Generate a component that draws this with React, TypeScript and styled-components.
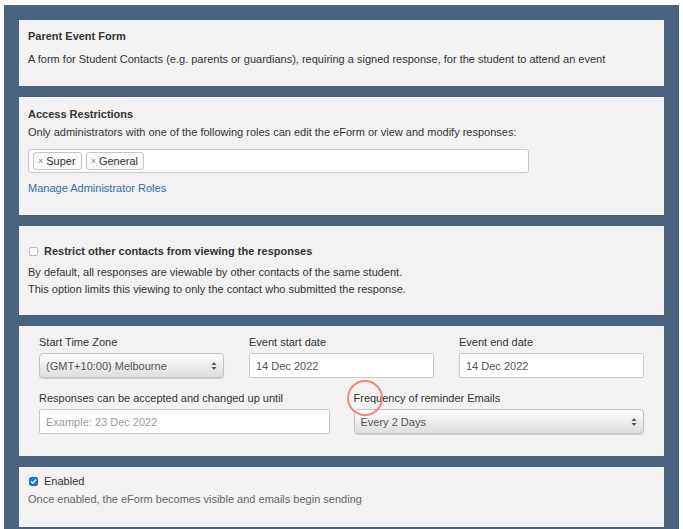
import React from "react"
import styled, { createGlobalStyle } from "styled-components"

const GlobalStyle = createGlobalStyle`
	html, body {
		margin: 0;
		padding: 0;
		background: #ffffff;
	}
	body {
		font-family: "Liberation Sans", Arial, Helvetica, sans-serif;
		font-size: 11px;
		color: #333333;
	}
`

const Page = styled.div`
	padding: 5px 4px 0 4px;
	width: 675px;
	height: 524px;
	overflow: hidden;
`

const Frame = styled.div`
	position: relative;
	background: #4a6480;
	height: 524px;
	padding: 15px 15px 0 15px;
	box-sizing: border-box;
	display: flex;
	flex-direction: column;
	gap: 11px;
`

const Panel = styled.section<{ $top?: number; $bottom?: number; $side?: number }>`
	background: #f2f2f2;
	padding: ${({ $top = 8 }) => $top}px ${({ $side = 9 }) => $side}px
		${({ $bottom = 19 }) => $bottom}px;
	flex-shrink: 0;
`

const Title = styled.div`
	font-weight: bold;
	line-height: 16px;
	color: #333;
`

const Text = styled.div<{ $muted?: boolean; $gap?: number }>`
	line-height: ${({ $gap }) => ($gap ? 17 : 16)}px;
	margin-top: ${({ $gap = 2 }) => $gap}px;
	color: ${({ $muted }) => ($muted ? "#666" : "#333")};
`

const TagBox = styled.div`
	margin-top: 9px;
	width: 501px;
	height: 24px;
	box-sizing: border-box;
	background: #fff;
	border: 1px solid #c8c8c8;
	border-radius: 3px;
	display: flex;
	align-items: center;
	gap: 4px;
	padding: 0 4px;
`

const Tag = styled.span`
	display: inline-flex;
	align-items: center;
	height: 18px;
	box-sizing: border-box;
	border: 1px solid #c5c5c5;
	border-radius: 3px;
	padding: 0 5px 0 4px;
	background: #fafafa;
	color: #333;
	font-size: 11px;
	gap: 3px;
`

const TagX = styled.span`
	color: #888;
	font-size: 9px;
`

const Link = styled.a`
	display: block;
	margin-top: 7px;
	line-height: 16px;
	color: #2d6fb0;
	text-decoration: none;
`

const CheckRow = styled.label`
	display: flex;
	align-items: center;
	gap: 6px;
	line-height: 16px;
`

const Box = styled.span<{ $checked?: boolean }>`
	width: 9px;
	height: 9px;
	margin-left: 1px;
	box-sizing: border-box;
	border-radius: 2px;
	display: inline-flex;
	align-items: center;
	justify-content: center;
	border: 1px solid ${({ $checked }) => ($checked ? "#1b72e8" : "#b9b9b9")};
	background: ${({ $checked }) => ($checked ? "#1b72e8" : "#fff")};
`

const CheckLabel = styled.span<{ $bold?: boolean }>`
	font-weight: ${({ $bold }) => ($bold ? "bold" : "normal")};
	color: #333;
`

const Grid = styled.div<{ $cols: number; $gap: number; $top?: number }>`
	display: grid;
	grid-template-columns: repeat(${({ $cols }) => $cols}, 1fr);
	column-gap: ${({ $gap }) => $gap}px;
	margin-top: ${({ $top = 0 }) => $top}px;
`

const Field = styled.div`
	display: flex;
	flex-direction: column;
`

const Label = styled.div`
	line-height: 16px;
	color: #333;
	margin-bottom: 3px;
`

const Input = styled.div<{ $placeholder?: boolean }>`
	height: 25px;
	box-sizing: border-box;
	background: #fff;
	border: 1px solid #c9c9c9;
	border-radius: 2px;
	padding: 0 6px;
	display: flex;
	align-items: center;
	color: ${({ $placeholder }) => ($placeholder ? "#9a9a9a" : "#555")};
`

const Select = styled.div`
	height: 25px;
	box-sizing: border-box;
	border: 1px solid #c3c3c3;
	border-radius: 4px;
	padding: 0 6px;
	display: flex;
	align-items: center;
	justify-content: space-between;
	color: #555;
	background: linear-gradient(#ffffff, #eeeeee 45%, #dedede);
	box-shadow: 0 1px 1px rgba(0, 0, 0, 0.15);
`

const ClickMark = styled.div`
	position: absolute;
	left: 343px;
	top: 375px;
	width: 36px;
	height: 36px;
	box-sizing: border-box;
	border: 2px solid #f08a7a;
	border-radius: 50%;
	pointer-events: none;
`

const Arrows = () => (
	<svg width="6" height="10" viewBox="0 0 6 10">
		<path d="M3 1 L5.5 4 H0.5 Z" fill="#555" />
		<path d="M3 9 L5.5 6 H0.5 Z" fill="#555" />
	</svg>
)

const Tick = () => (
	<svg width="7" height="7" viewBox="0 0 7 7">
		<path d="M1 3.6 L2.8 5.3 L6 1.5" stroke="#fff" strokeWidth="1.4" fill="none" />
	</svg>
)

export default function App() {
	return (
		<Page>
			<GlobalStyle />
			<Frame>
				<Panel $top={8} $bottom={18}>
					<Title>Parent Event Form</Title>
					<Text $gap={7}>
						A form for Student Contacts (e.g. parents or guardians), requiring a signed response, for the
						student to attend an event
					</Text>
				</Panel>

				<Panel $top={9} $bottom={19}>
					<Title>Access Restrictions</Title>
					<Text>Only administrators with one of the following roles can edit the eForm or view and modify responses:</Text>
					<TagBox>
						<Tag>
							<TagX>×</TagX>Super
						</Tag>
						<Tag>
							<TagX>×</TagX>General
						</Tag>
					</TagBox>
					<Link href="#">Manage Administrator Roles</Link>
				</Panel>

				<Panel $top={17} $bottom={18}>
					<CheckRow>
						<Box />
						<CheckLabel $bold>Restrict other contacts from viewing the responses</CheckLabel>
					</CheckRow>
					<Text $gap={5}>By default, all responses are viewable by other contacts of the same student.</Text>
					<Text $gap={0}>This option limits this viewing to only the contact who submitted the response.</Text>
				</Panel>

				<Panel $top={8} $bottom={22} $side={20}>
					<Grid $cols={3} $gap={25}>
						<Field>
							<Label>Start Time Zone</Label>
							<Select>
								<span>(GMT+10:00) Melbourne</span>
								<Arrows />
							</Select>
						</Field>
						<Field>
							<Label>Event start date</Label>
							<Input>14 Dec 2022</Input>
						</Field>
						<Field>
							<Label>Event end date</Label>
							<Input>14 Dec 2022</Input>
						</Field>
					</Grid>
					<Grid $cols={2} $gap={24} $top={12}>
						<Field>
							<Label>Responses can be accepted and changed up until</Label>
							<Input $placeholder>Example: 23 Dec 2022</Input>
						</Field>
						<Field>
							<Label>Frequency of reminder Emails</Label>
							<Select>
								<span>Every 2 Days</span>
								<Arrows />
							</Select>
						</Field>
					</Grid>
				</Panel>

				<Panel $top={6} $bottom={20}>
					<CheckRow>
						<Box $checked>
							<Tick />
						</Box>
						<CheckLabel>Enabled</CheckLabel>
					</CheckRow>
					<Text $muted>Once enabled, the eForm becomes visible and emails begin sending</Text>
				</Panel>
				<ClickMark />
			</Frame>
		</Page>
	)
}
